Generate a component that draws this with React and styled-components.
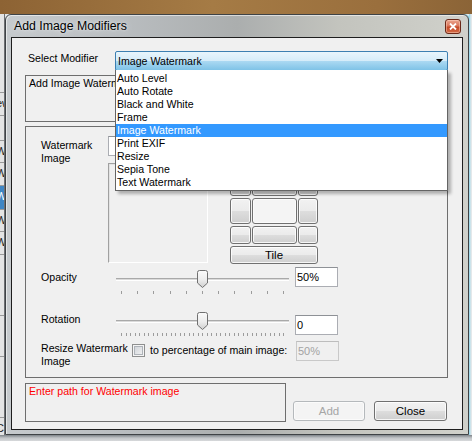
import React from 'react'
import styled, { createGlobalStyle } from 'styled-components'

const GlobalStyle = createGlobalStyle`
  html, body { margin: 0; padding: 0; }
  body {
    font-family: "Liberation Sans", Arial, sans-serif;
    font-size: 10.6px;
    color: #000;
  }
`

const Desktop = styled.div`
  width: 472px;
  height: 441px;
  overflow: hidden;
  display: grid;
  grid-template-columns: 5px 464px 3px;
  grid-template-rows: 14px 421px 6px;
  background: #e2e5e8;
`

const Wallpaper = styled.div`
  grid-column: 1 / -1;
  background: linear-gradient(to right, #8d6334, #a57b45 45%, #9a6f3d 80%, #8b6437);
`

const BackWindow = styled.div`
  display: flex;
  flex-direction: column;
  background: #c9cbcd;
  border-right: 1px solid #6d6f72;
  overflow: hidden;
`

const BackRow = styled.div`
  height: ${p => p.h || 22}px;
  flex: none;
  border-bottom: 1px solid #9a9a9a;
  background: ${p => (p.sel ? '#3f86c4' : '#e4e4e4')};
  color: ${p => (p.sel ? '#fff' : '#222')};
  font-size: 11px;
  line-height: 20px;
  white-space: nowrap;
  text-indent: -4px;
`

const RightEdge = styled.div`
  background: linear-gradient(to right, #8fd6ea, #e4e8ea 70%);
`

const BottomStrip = styled.div`
  grid-column: 1 / -1;
  background: linear-gradient(to bottom, #7d8388, #c2c5c8 50%, #d7d9db);
`

const Frame = styled.div`
  display: flex;
  flex-direction: column;
  border: 1px solid #3f4346;
  border-radius: 6px 6px 0 0;
  padding: 0 5px 4px 5px;
  background: linear-gradient(to right, #c6cacd 0%, #b9bdc0 25%, #abaeae 50%, #c3c4be 72%, #d0d1cb 100%);
  box-shadow: inset 1px 1px 0 rgba(255, 255, 255, 0.55), 1px 0 0 #6fd0e6;
`

const TitleBar = styled.div`
  height: 22px;
  display: flex;
  align-items: flex-start;
  justify-content: space-between;
  padding: 0 2px 0 2px;
`

const Title = styled.div`
  font-size: 12.3px;
  line-height: 22px;
  color: #000;
  padding-left: 1px;
  text-shadow: 0 0 6px rgba(235, 238, 240, 0.95), 0 0 2px rgba(235, 238, 240, 0.9);
`

const CloseBox = styled.div`
  margin-top: 4px;
  width: 16px;
  height: 15px;
  box-sizing: border-box;
  border: 1px solid #6b2818;
  border-radius: 3px;
  background: linear-gradient(to bottom, #eba58f 0%, #d9765b 45%, #c54a28 55%, #d36a45 100%);
  box-shadow: inset 0 0 0 1px rgba(255, 220, 200, 0.45);
  display: flex;
  align-items: center;
  justify-content: center;
`

const Client = styled.div`
  flex: 1;
  border: 1px solid #1e1e1e;
  background: #f0f0f0;
  padding: 13px 14px 7px 13px;
  display: flex;
  flex-direction: column;
  gap: 4px;
`

const ModifierRow = styled.div`
  display: flex;
  height: 20px;
  flex: none;
`

const FieldLabel = styled.div`
  width: ${p => p.w}px;
  flex: none;
  padding-top: ${p => p.top || 0}px;
  padding-left: ${p => p.left || 0}px;
  box-sizing: border-box;
  line-height: 13px;
`

const Combo = styled.div`
  position: relative;
  flex: 1;
  box-sizing: border-box;
  border: 1px solid #3c7fb1;
  border-radius: 2px;
  background: linear-gradient(to bottom, #e8f5fc 0%, #d5ecf9 48%, #aad8f2 52%, #7fc3e7 100%);
  display: flex;
  align-items: center;
  justify-content: space-between;
  padding: 0 4px 0 2px;
`

const ComboText = styled.span`
  line-height: 18px;
`

const DropList = styled.div`
  position: absolute;
  top: 100%;
  left: -1px;
  right: -1px;
  z-index: 5;
  background: #fff;
  border: 1px solid #646464;
  border-top: none;
  padding: 2px 0 1px;
  box-shadow: 3px 3px 3px rgba(0, 0, 0, 0.28);
`

const DropItem = styled.div`
  height: 13px;
  line-height: 13px;
  padding-left: 1px;
  white-space: nowrap;
  background: ${p => (p.sel ? '#3399ff' : 'transparent')};
  color: ${p => (p.sel ? '#fff' : '#000')};
`

const Panel = styled.div`
  flex: none;
  height: ${p => p.h}px;
  box-sizing: border-box;
  border: 1px solid #6e6e6e;
  color: ${p => p.color || '#000'};
  padding: ${p => p.pad || '0'};
  line-height: 13px;
  white-space: nowrap;
  overflow: hidden;
`

const GroupPanel = styled.div`
  flex: none;
  height: 252px;
  box-sizing: border-box;
  border: 1px solid #6e6e6e;
  padding: 9px 0 0 15px;
  display: flex;
  flex-direction: column;
`

const ImageRow = styled.div`
  display: flex;
  height: 128px;
`

const ImageColumn = styled.div`
  display: flex;
  flex-direction: column;
  gap: 7px;
`

const TextBox = styled.div`
  width: ${p => p.w || 43}px;
  height: 20px;
  flex: none;
  box-sizing: border-box;
  margin-top: ${p => p.top || 0}px;
  border: 1px solid ${p => (p.disabled ? '#c9c9c9' : '#abadb3')};
  border-top-color: ${p => (p.disabled ? '#bdbdbd' : '#8e9196')};
  background: ${p => (p.disabled ? '#f0f0f0' : '#fff')};
  color: ${p => (p.disabled ? '#a3a3a3' : '#000')};
  padding-left: 1px;
  line-height: 18px;
  font-size: 11px;
`

const PreviewRow = styled.div`
  display: flex;
  align-items: flex-end;
  gap: 22px;
`

const Preview = styled.div`
  width: 100px;
  height: 100px;
  box-sizing: border-box;
  border: 1px solid #a0a0a0;
  border-right-color: #fff;
  border-bottom-color: #fff;
  box-shadow: inset 1px 1px 0 #e3e3e3;
  margin-bottom: 1px;
`

const AnchorGrid = styled.div`
  display: grid;
  grid-template-columns: 21px 45px 20px;
  grid-template-rows: 18px 26px 18px 18px;
  column-gap: 1px;
  row-gap: 2px;
`

const WinButton = styled.div`
  box-sizing: border-box;
  border: 1px solid ${p => (p.disabled ? '#b5b9bc' : '#707070')};
  border-radius: 3px;
  background: ${p =>
    p.disabled
      ? '#f4f4f4'
      : p.flat
      ? '#f4f4f4'
      : 'linear-gradient(to bottom, #f2f2f2 0%, #ebebeb 48%, #dddddd 52%, #cfcfcf 100%)'};
  box-shadow: ${p => (p.flat || p.disabled ? 'inset 0 0 0 1px #fbfbfb' : 'inset 0 0 0 1px rgba(255,255,255,0.8)')};
  color: ${p => (p.disabled ? '#a6a6a6' : '#000')};
  display: flex;
  align-items: center;
  justify-content: center;
  grid-column: ${p => p.span || 'auto'};
  width: ${p => (p.w ? `${p.w}px` : 'auto')};
  height: ${p => (p.h ? `${p.h}px` : 'auto')};
  margin-left: ${p => p.ml || 0}px;
  margin-bottom: ${p => p.mb || 0}px;
  font-size: 11.5px;
`

const SliderRow = styled.div`
  display: grid;
  grid-template-columns: 75px 173px 6px 43px;
  align-items: start;
  height: ${p => p.h}px;
  margin-top: ${p => p.mt || 0}px;
  flex: none;
`

const SliderBox = styled.div`
  position: relative;
  margin-top: ${p => p.top}px;
  height: 26px;
`

const Track = styled.div`
  margin-top: 8px;
  height: 1px;
  border-top: 1px solid #a9a9a9;
  border-bottom: 1px solid #ffffff;
  background: #dadada;
`

const ThumbWrap = styled.div`
  position: absolute;
  top: 0;
  width: 11px;
  height: 18px;
`

const Ticks = styled.div`
  margin-top: 10px;
  padding: 0 5px 0 5px;
  display: flex;
  justify-content: space-between;
`

const Tick = styled.div`
  width: 1px;
  height: 3px;
  background: #9c9c9c;
`

const ResizeRow = styled.div`
  display: grid;
  grid-template-columns: 91px 13px 151px 43px;
  align-items: start;
`

const Check = styled.div`
  width: 13px;
  height: 13px;
  box-sizing: border-box;
  margin-top: 3px;
  border: 1px solid #8e8f8f;
  background: linear-gradient(135deg, #cbcfd5, #f6f6f6);
  box-shadow: inset 0 0 0 1px #f4f4f4, inset 0 0 0 2px #aeb3b9;
`

const CheckText = styled.div`
  padding-left: 5px;
  margin-top: 3px;
  line-height: 13px;
  white-space: nowrap;
`

const BottomRow = styled.div`
  display: flex;
  align-items: flex-end;
  margin-top: 1px;
`

const items = [
  'Auto Level',
  'Auto Rotate',
  'Black and White',
  'Frame',
  'Image Watermark',
  'Print EXIF',
  'Resize',
  'Sepia Tone',
  'Text Watermark',
]

const Thumb = () => (
  <svg width="11" height="18" viewBox="0 0 11 18">
    <defs>
      <linearGradient id="thumbFill" x1="0" y1="0" x2="0" y2="1">
        <stop offset="0" stopColor="#fbfbfb" />
        <stop offset="0.55" stopColor="#ececec" />
        <stop offset="1" stopColor="#cfcfcf" />
      </linearGradient>
    </defs>
    <path
      d="M0.5 2.5 Q0.5 0.5 2.5 0.5 H8.5 Q10.5 0.5 10.5 2.5 V13 L5.5 17.5 L0.5 13 Z"
      fill="url(#thumbFill)"
      stroke="#707070"
    />
  </svg>
)

const Slider = ({ fraction, ticks, top }) => {
  const left = Math.round(5 + fraction * 163 - 5.5)
  return (
    <SliderBox top={top}>
      <Track />
      <Ticks>
        {Array.from({ length: ticks }).map((_, i) => (
          <Tick key={i} />
        ))}
      </Ticks>
      <ThumbWrap style={{ left }}>
        <Thumb />
      </ThumbWrap>
    </SliderBox>
  )
}

const backRows = [
  { h: 22, t: 'ew' },
  { h: 24, t: '' },
  { h: 21, t: 'W' },
  { h: 22, t: 'W' },
  { h: 23, t: 'W', sel: true },
  { h: 21, t: 'W' },
  { h: 22, t: 'W' },
  { h: 60, t: '' },
  { h: 40, t: '' },
  { h: 60, t: '' },
  { h: 40, t: 'C' },
]

export default function App() {
  return (
    <>
      <GlobalStyle />
      <Desktop>
        <Wallpaper />
        <BackWindow>
          <BackRow h={78} />
          {backRows.map((r, i) => (
            <BackRow key={i} h={r.h} sel={r.sel}>
              {r.t}
            </BackRow>
          ))}
        </BackWindow>
        <Frame>
          <TitleBar>
            <Title>Add Image Modifiers</Title>
            <CloseBox>
              <svg width="8" height="7" viewBox="0 0 8 7">
                <path d="M1 0.5 L7 6.5 M7 0.5 L1 6.5" stroke="#fff" strokeWidth="1.8" />
              </svg>
            </CloseBox>
          </TitleBar>
          <Client>
            <ModifierRow>
              <FieldLabel w={90} left={3} top={1}>Select Modifier</FieldLabel>
              <Combo>
                <ComboText>Image Watermark</ComboText>
                <svg width="7" height="4" viewBox="0 0 7 4">
                  <path d="M0 0 H7 L3.5 4 Z" fill="#000" />
                </svg>
                <DropList>
                  {items.map(it => (
                    <DropItem key={it} sel={it === 'Image Watermark'}>
                      {it}
                    </DropItem>
                  ))}
                </DropList>
              </Combo>
            </ModifierRow>

            <Panel h={47} pad="1px 3px">Add Image Watermark to the photo</Panel>

            <GroupPanel>
              <ImageRow>
                <FieldLabel w={67} top={3}>
                  Watermark
                  <br />
                  Image
                </FieldLabel>
                <ImageColumn>
                  <TextBox w={230} />
                  <PreviewRow>
                    <Preview />
                    <AnchorGrid>
                      <WinButton />
                      <WinButton />
                      <WinButton />
                      <WinButton />
                      <WinButton flat />
                      <WinButton />
                      <WinButton />
                      <WinButton />
                      <WinButton />
                      <WinButton span="1 / -1">Tile</WinButton>
                    </AnchorGrid>
                  </PreviewRow>
                </ImageColumn>
              </ImageRow>

              <SliderRow h={45} mt={3}>
                <FieldLabel w={75} top={4}>Opacity</FieldLabel>
                <Slider fraction={0.5} ticks={11} top={3} />
                <span />
                <TextBox>50%</TextBox>
              </SliderRow>

              <SliderRow h={29}>
                <FieldLabel w={75} top={1}>Rotation</FieldLabel>
                <Slider fraction={0.5} ticks={37} top={0} />
                <span />
                <TextBox top={3}>0</TextBox>
              </SliderRow>

              <ResizeRow>
                <FieldLabel w={91} top={1}>
                  Resize Watermark
                  <br />
                  Image
                </FieldLabel>
                <Check />
                <CheckText>to percentage of main image:</CheckText>
                <TextBox disabled>50%</TextBox>
              </ResizeRow>
            </GroupPanel>

            <BottomRow>
              <Panel h={39} pad="1px 3px" color="#ff0000" style={{ width: 261 }}>
                Enter path for Watermark image
              </Panel>
              <WinButton disabled w={72} h={20} ml={7} mb={1}>
                Add
              </WinButton>
              <WinButton w={73} h={20} ml={9} mb={1}>
                Close
              </WinButton>
            </BottomRow>
          </Client>
        </Frame>
        <RightEdge />
        <BottomStrip />
      </Desktop>
    </>
  )
}
